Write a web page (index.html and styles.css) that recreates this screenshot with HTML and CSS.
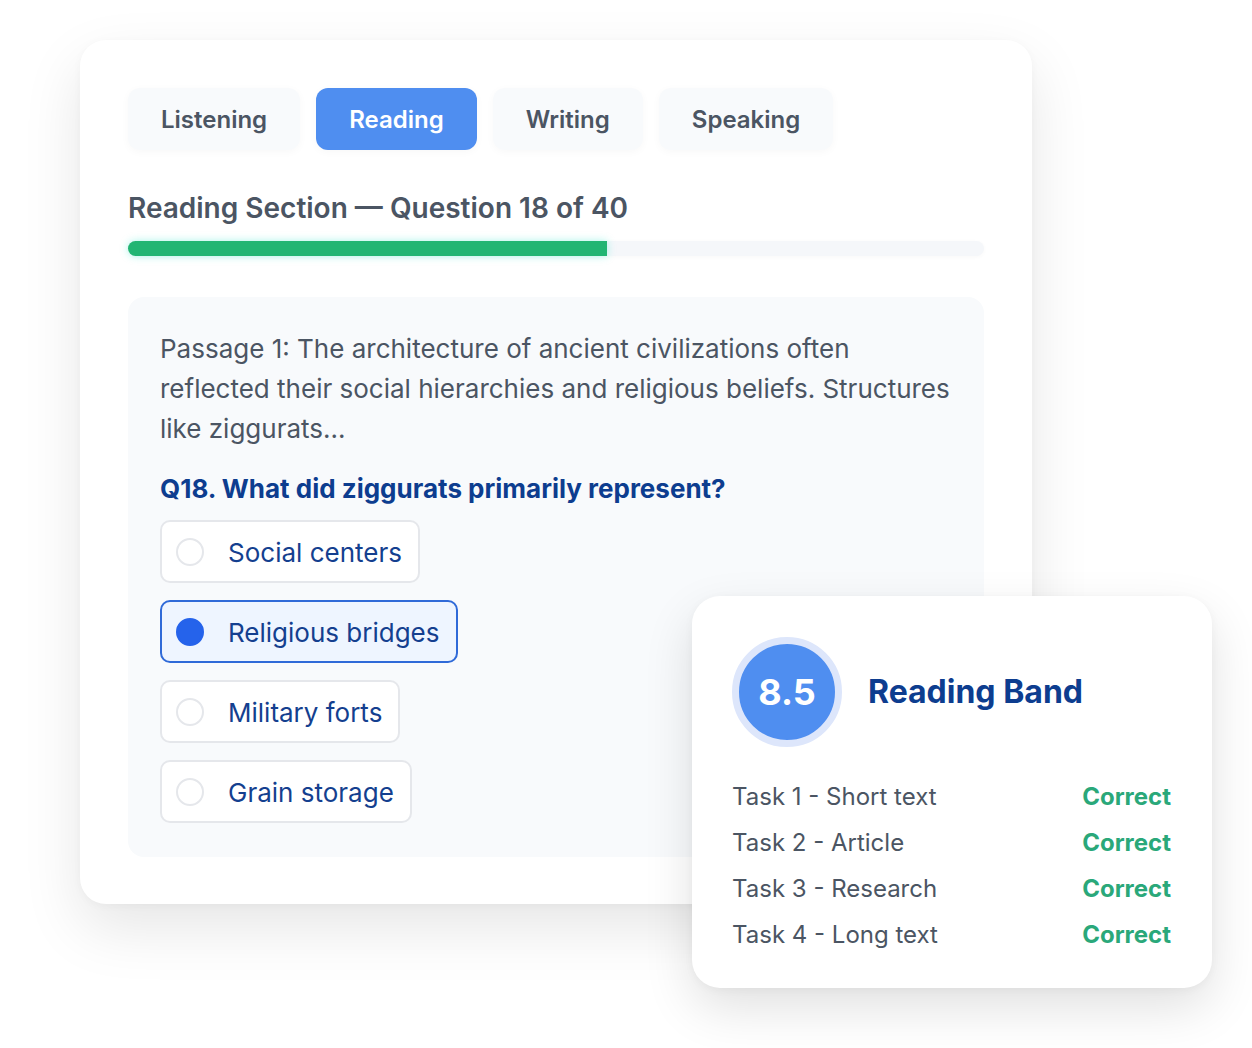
FILE: index.html
```html
<!DOCTYPE html>
<html lang="en">
<head>
    <meta charset="UTF-8">
    <meta name="viewport" content="width=device-width, initial-scale=1.0">
    <title>IELTS Practice - Reading</title>
    <link rel="stylesheet" href="styles.css">
</head>
<body>
    <div class="stage">
        <div class="test-card">
            <div class="tabs">
                <div class="tab">Listening</div>
                <div class="tab active">Reading</div>
                <div class="tab">Writing</div>
                <div class="tab">Speaking</div>
            </div>

            <h2 class="section-title">Reading Section — Question 18 of 40</h2>
            <div class="progress">
                <div class="progress-fill" style="width: 56%"></div>
            </div>

            <div class="passage">
                <p class="passage-text">Passage 1: The architecture of ancient civilizations often reflected their social hierarchies and religious beliefs. Structures like ziggurats...</p>
                <div class="question">Q18. What did ziggurats primarily represent?</div>
                <div class="options">
                    <div class="option"><span class="radio"></span>Social centers</div>
                    <div class="option selected"><span class="radio"></span>Religious bridges</div>
                    <div class="option"><span class="radio"></span>Military forts</div>
                    <div class="option"><span class="radio"></span>Grain storage</div>
                </div>
            </div>
        </div>

        <div class="result-card">
            <div class="band">
                <div class="band-score">8.5</div>
                <div class="band-title">Reading Band</div>
            </div>
            <div class="tasks">
                <div class="task"><span>Task 1 - Short text</span><span class="ok">Correct</span></div>
                <div class="task"><span>Task 2 - Article</span><span class="ok">Correct</span></div>
                <div class="task"><span>Task 3 - Research</span><span class="ok">Correct</span></div>
                <div class="task"><span>Task 4 - Long text</span><span class="ok">Correct</span></div>
            </div>
        </div>
    </div>
</body>
</html>
```

FILE: styles.css
```css
body {
    margin: 0;
    padding: 0;
    font-family: 'Inter', 'Noto Sans', sans-serif;
    background: #fff;
    color: #4b5563;
}

.stage {
    position: relative;
    width: 1252px;
    height: 1048px;
    padding: 40px 0 0 80px;
    box-sizing: border-box;
}

.test-card {
    width: 952px;
    height: 864px;
    box-sizing: border-box;
    padding: 48px;
    background: #fff;
    border-radius: 26px;
    box-shadow: 0 24px 60px rgba(0, 0, 0, 0.1), 0 2px 10px rgba(0, 0, 0, 0.03);
}

.tabs {
    display: flex;
    gap: 16px;
}

.tab {
    height: 62px;
    padding: 0 33px;
    display: flex;
    align-items: center;
    font-size: 24px;
    font-weight: 600;
    color: #4b5563;
    background: #f8fafc;
    border-radius: 12px;
    box-shadow: 0 2px 8px rgba(15, 23, 42, 0.03);
}

.tab.active {
    background: #4f8ef0;
    color: #fff;
}

.section-title {
    margin: 40px 0 0;
    font-size: 28px;
    line-height: 36px;
    font-weight: 600;
    color: #4b5563;
}

.progress {
    margin-top: 15px;
    height: 15px;
    background: #f5f7fa;
    border-radius: 8px;
    box-shadow: 0 1px 4px rgba(15, 23, 42, 0.03);
}

.progress-fill {
    height: 100%;
    background: #22b573;
    border-radius: 8px 0 0 8px;
    box-shadow: 0 0 8px rgba(20, 230, 200, 0.35);
}

.passage {
    margin-top: 41px;
    height: 560px;
    box-sizing: border-box;
    padding: 32px;
    background: #f8fafc;
    border-radius: 16px;
}

.passage-text {
    margin: 0;
    font-size: 26px;
    line-height: 40px;
    color: #4b5563;
}

.question {
    margin-top: 20px;
    font-size: 26px;
    line-height: 40px;
    font-weight: 700;
    color: #0d3d8f;
}

.options {
    margin-top: 11px;
    display: flex;
    flex-direction: column;
    align-items: flex-start;
    gap: 17px;
}

.option {
    height: 63px;
    box-sizing: border-box;
    display: flex;
    align-items: center;
    gap: 24px;
    padding: 1px 16px 0 14px;
    font-size: 26px;
    color: #143f8f;
    background: #fff;
    border: 2px solid #e5e7eb;
    border-radius: 10px;
}

.radio {
    width: 28px;
    height: 28px;
    box-sizing: border-box;
    border: 2px solid #e5e7eb;
    border-radius: 50%;
    background: #fff;
}

.option.selected {
    background: #eef5ff;
    border-color: #2f6ad8;
}

.option.selected .radio {
    background: #2563eb;
    border-color: #2563eb;
}

.result-card {
    position: absolute;
    left: 692px;
    top: 596px;
    width: 520px;
    height: 392px;
    box-sizing: border-box;
    padding: 41px 41px 0 40px;
    background: #fff;
    border-radius: 28px;
    box-shadow: 0 20px 50px rgba(0, 0, 0, 0.12), 0 2px 10px rgba(0, 0, 0, 0.04);
}

.band {
    display: flex;
    align-items: center;
    gap: 26px;
}

.band-score {
    width: 96px;
    height: 96px;
    border-radius: 50%;
    background: #4f8ef0;
    border: 7px solid #dde6fb;
    display: flex;
    align-items: center;
    justify-content: center;
    font-size: 36px;
    font-weight: 700;
    color: #fff;
}

.band-title {
    margin-top: -2px;
    font-size: 32px;
    font-weight: 700;
    color: #0d3d8f;
}

.tasks {
    margin-top: 35px;
    display: flex;
    flex-direction: column;
    gap: 16px;
}

.task {
    display: flex;
    justify-content: space-between;
    font-size: 24px;
    line-height: 30px;
    color: #4b5563;
}

.task .ok {
    font-weight: 700;
    color: #2aa87a;
}
```
